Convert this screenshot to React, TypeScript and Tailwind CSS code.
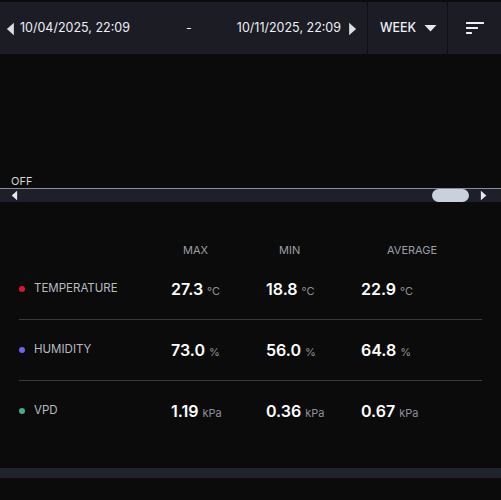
const rows = [
  { label: "TEMPERATURE", dot: "bg-[#e0122f]", unit: "°C", values: ["27.3", "18.8", "22.9"] },
  { label: "HUMIDITY", dot: "bg-[#6a63f0]", unit: "%", values: ["73.0", "56.0", "64.8"] },
  { label: "VPD", dot: "bg-[#4fa88a]", unit: "kPa", values: ["1.19", "0.36", "0.67"] },
];

function TriLeft({ className }: { className?: string }) {
  return (
    <svg viewBox="0 0 8 12" className={className} fill="currentColor">
      <path d="M7 0.5 L7 11.5 L0.8 6 Z" />
    </svg>
  );
}

function TriRight({ className }: { className?: string }) {
  return (
    <svg viewBox="0 0 8 12" className={className} fill="currentColor">
      <path d="M1 0.5 L1 11.5 L7.2 6 Z" />
    </svg>
  );
}

export default function App() {
  return (
    <div className="h-[500px] w-[501px] overflow-hidden bg-[#0b0b0c] text-white" style={{ fontFamily: "Inter, 'Noto Sans', sans-serif" }}>
      <div className="h-[2px] bg-[#0b0b0c]" />
      <header className="flex h-[52px] bg-[#1b1c24]">
        <div className="flex flex-1 items-center pl-[6px] pr-[10px] pt-[1px] text-[12.5px] text-[#eef0f4]">
          <TriLeft className="h-[14px] w-[9px] text-[#d9dde4]" />
          <span className="ml-[5px]">10/04/2025, 22:09</span>
          <span className="ml-[56px]">-</span>
          <span className="ml-auto">10/11/2025, 22:09</span>
          <TriRight className="ml-[7px] h-[14px] w-[9px] text-[#d9dde4]" />
        </div>
        <div className="w-px bg-[#101117]" />
        <div className="flex w-[79px] items-center pl-[12px] pt-[1px] text-[12.5px] font-medium text-[#eef0f4]">
          <span>WEEK</span>
          <svg viewBox="0 0 12 7" className="ml-[8px] h-[7px] w-[13px]" fill="#e3e6eb">
            <path d="M0 0 L12 0 L6 6.5 Z" />
          </svg>
        </div>
        <div className="w-px bg-[#101117]" />
        <div className="flex flex-1 max-w-[53px] items-center justify-center">
          <svg viewBox="0 0 18 12" className="h-[12px] w-[18px]" fill="#eef0f4">
            <rect x="0" y="0" width="18" height="2" rx="0.5" />
            <rect x="0" y="5" width="12" height="2" rx="0.5" />
            <rect x="0" y="10" width="6" height="2" rx="0.5" />
          </svg>
        </div>
      </header>

      <div className="h-[120px]" />
      <div className="pl-[11px] text-[11px] leading-[14px] text-[#d4d6da]">OFF</div>
      <div className="h-px bg-[#8a8d94]" />
      <div className="flex h-[13px] items-center bg-[#1e2029] pl-[11px] pr-[14px]">
        <TriLeft className="h-[11px] w-[7px] text-[#e6e9ee]" />
        <div className="ml-auto h-[13px] w-[37px] rounded-full bg-[#c9d1dd]" />
        <TriRight className="ml-[11px] h-[11px] w-[7px] text-[#e6e9ee]" />
      </div>

      <div className="mt-[40px] grid grid-cols-[171px_95px_95px_1fr] text-[11px] text-[#9c9ea3]">
        <div />
        <div className="pl-[12px]">MAX</div>
        <div className="pl-[13px]">MIN</div>
        <div className="pl-[26px]">AVERAGE</div>
      </div>

      <div className="pl-[19px] pr-[19px]">
        {rows.map((row, i) => (
          <div key={row.label} className={i < rows.length - 1 ? "border-b border-[#3a3b40]" : ""}>
            <div className="grid h-[60px] grid-cols-[152px_95px_95px_1fr] items-center">
              <div className="flex items-center">
                <span className={`h-[6px] w-[6px] rounded-full ${row.dot}`} />
                <span className="ml-[9px] text-[11.5px] text-[#b9bbc0]">{row.label}</span>
              </div>
              {row.values.map((v) => (
                <div key={v} className="flex items-baseline">
                  <span className="text-[16px] font-semibold text-white">{v}</span>
                  <span className="ml-[4px] text-[11px] text-[#8e9096]">{row.unit}</span>
                </div>
              ))}
            </div>
          </div>
        ))}
      </div>

      <div className="mt-[27px] h-[10px] bg-[#20222c]" />
    </div>
  );
}
